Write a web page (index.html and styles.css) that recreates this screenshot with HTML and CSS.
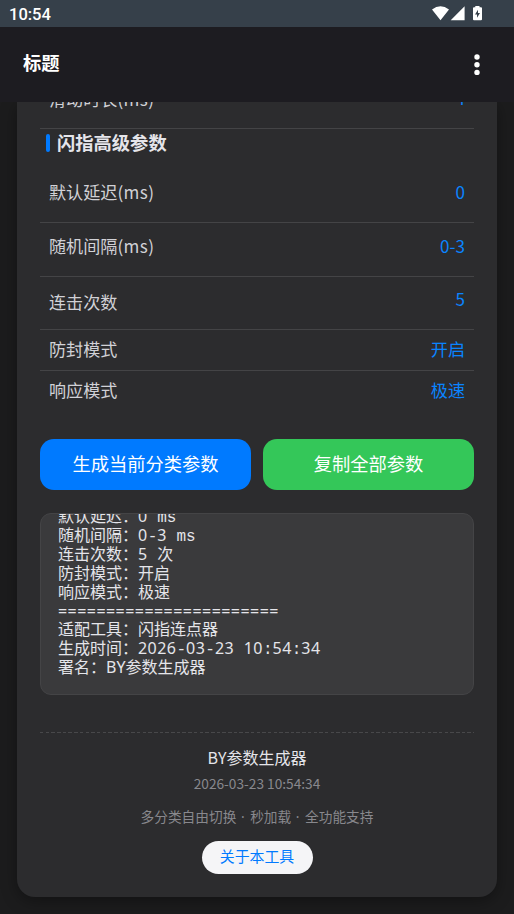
FILE: index.html
```html
<!DOCTYPE html>
<html lang="zh-CN">
<head>
<meta charset="utf-8">
<title>标题</title>
<link rel="stylesheet" href="styles.css">
</head>
<body>
<div class="status">
  <span class="clock">10:54</span>
  <svg class="status-icons" width="52" height="16" viewBox="0 0 52 16">
    <path fill="#fff" d="M0 3.6Q8.5-3 17 3.6L8.5 14.2ZM32.6.3V14.3H18.7ZM43.3 0H47.5V1.3H49Q50 1.3 50 2.3V13.2Q50 14.3 49 14.3H42Q41 14.3 41 13.2V2.3Q41 1.3 42 1.3H43.3Z"/>
    <path fill="#36404a" d="M46 3.7V7H48L45 11.7V8.5H43Z"/>
  </svg>
</div>
<header class="bar">
  <h1>标题</h1>
  <svg width="8" height="24" viewBox="0 0 8 24" fill="#fff"><circle cx="4" cy="4" r="2.7"/><circle cx="4" cy="11.7" r="2.7"/><circle cx="4" cy="19.4" r="2.7"/></svg>
</header>
<main class="view">
  <section class="card">
    <div class="row cut"><span>滑动时长<i>(ms)</i></span><b>4</b></div>
    <h2><span>闪指高级参数</span></h2>
    <div class="row first"><span>默认延迟<i>(ms)</i></span><b>0</b></div>
    <div class="row second"><span>随机间隔<i>(ms)</i></span><b>0-3</b></div>
    <div class="row third"><span class="low">连击次数</span><b>5</b></div>
    <div class="row short"><span>防封模式</span><b>开启</b></div>
    <div class="row short last"><span>响应模式</span><b>极速</b></div>
    <div class="buttons"><button>生成当前分类参数</button><button class="green">复制全部参数</button></div>
    <div class="output"><div class="lines">
<div>默认延迟：<i>0</i> ms</div>
<div>随机间隔：<i>0</i>-<i>3</i> ms</div>
<div>连击次数：<i>5</i> 次</div>
<div>防封模式：开启</div>
<div>响应模式：极速</div>
<div><i>=======================</i></div>
<div>适配工具：闪指连点器</div>
<div>生成时间：<i>2026</i>-<i>03</i>-<i>23</i> <i>10</i>:<i>54</i>:<i>34</i></div>
<div>署名：<em>BY</em>参数生成器</div>
    </div></div>
    <footer>
      <div class="dash"></div>
      <p class="name">BY参数生成器</p>
      <p class="date">2026-03-23 10:54:34</p>
      <p class="tags">多分类自由切换<i> · </i>秒加载<i> · </i>全功能支持</p>
      <button class="about">关于本工具</button>
    </footer>
  </section>
</main>
</body>
</html>
```
FILE: styles.css
```css
* { box-sizing: border-box; margin: 0; padding: 0; }
body {
  width: 514px; height: 914px; overflow: hidden;
  display: flex; flex-direction: column;
  background: #1c1c1d; color: #e5e5ea;
  font-family: "Noto Sans CJK SC", sans-serif;
}
i { font-style: normal; }
.status {
  height: 27px; flex: none; display: flex; justify-content: space-between; align-items: flex-start;
  padding: 6px 30px 0 9px; background: #36404a;
}
.clock { font: 500 16.5px/17px Roboto, sans-serif; color: #fff; }
.bar {
  height: 75px; flex: none; display: flex; justify-content: space-between; align-items: center;
  padding: 0 33px 0 23px; background: #1d1c21;
}
.bar h1 { font-size: 18.3px; line-height: 24px; font-weight: 700; color: #fff; margin-top: -5px; }
.view { flex: 1; min-height: 0; overflow: hidden; padding: 0 17px; }
.card {
  height: 795px; padding: 0 23px; background: #2c2c2e;
  border-radius: 0 0 18px 18px; box-shadow: 0 4px 16px rgba(0, 0, 0, .35);
}
.row {
  display: flex; justify-content: space-between; align-items: center;
  padding: 0 9px; border-bottom: 1px solid #444446;
  font-size: 17.1px; line-height: 24px; color: #d1d1d6;
}
.row span, .row b { margin-top: -2px; }
.row i { letter-spacing: .4px; }
.row b { font-weight: 400; color: #0a84ff; }
.cut { height: 27px; align-items: flex-start; }
.row.cut span { margin-top: -15px; }
.row.cut b { margin-top: -16px; }
h2 {
  height: 28px; display: flex; align-items: center; gap: 7px; padding: 0 0 0 6px;
  font-size: 18.3px; line-height: 28px; font-weight: 700;
}
h2 span { margin-top: -3px; }
h2::before { content: ""; width: 4px; height: 18px; border-radius: 2px; background: #007aff; }
.first { height: 66px; padding-top: 7px; }
.second { height: 54px; padding-bottom: 5px; }
.third { height: 53px; padding-bottom: 5px; }
.row.third b { margin-top: -4px; }
.low { padding-top: 5px; }
.short { height: 41px; }
.last { border: 0; padding-bottom: 2px; }
.buttons { display: flex; gap: 12px; margin-top: 27px; }
.buttons button {
  flex: 1; height: 51px; padding-bottom: 3px; border: 0; border-radius: 14px;
  background: #007aff; color: #fff; font: 18.3px/24px "Noto Sans CJK SC", sans-serif;
}
.buttons .green { background: #34c759; }
.output {
  height: 182px; margin-top: 23px; padding: 0 17px 15px; overflow: hidden;
  display: flex; align-items: flex-end;
  border: 1px solid #444446; border-radius: 11px; background: #3a3a3c;
}
.lines { font: 16px/18.85px "Liberation Mono", "Noto Sans CJK SC", monospace; white-space: nowrap; }
.lines div { height: 18.85px; }
.lines i, .lines em { font-family: "Noto Sans", sans-serif; font-style: normal; line-height: 0; }
.lines i { letter-spacing: .45px; }
footer { margin-top: 37px; display: flex; flex-direction: column; align-items: center; text-align: center; }
.dash { width: 100%; height: 1px; background: repeating-linear-gradient(90deg, #48484a 0 3.5px, transparent 3.5px 5.7px); }
.name { margin-top: 12px; font-size: 16px; line-height: 24px; }
.date { margin-top: 3px; font-size: 13.7px; line-height: 22px; color: #88888d; }
.tags { margin-top: 11px; font-size: 13.7px; line-height: 22px; color: #88888d; }
.tags i { font-family: "Noto Sans", sans-serif; letter-spacing: 1px; line-height: 0; white-space: pre; }
.about {
  width: 111px; height: 33px; margin-top: 14px; padding-bottom: 3px; border: 0; border-radius: 17px;
  background: #f5f5f7; color: #007aff; font: 14.9px/22px "Noto Sans CJK SC", sans-serif;
}
```
